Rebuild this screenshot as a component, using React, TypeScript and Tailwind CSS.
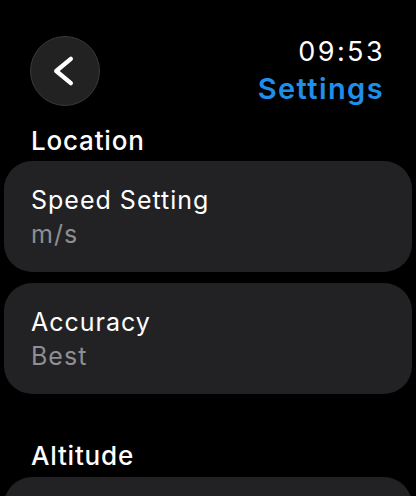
import React from "react";

interface IRow {
  title: string;
  value?: string;
}

const Card: React.FC<IRow> = ({ title, value }) => {
  return (
    <div className="h-[111px] rounded-[28px] bg-[#222224] pl-[27px] pt-[22px]">
      <div className="text-[25px] leading-[34px] tracking-[1px] text-white">
        {title}
      </div>
      {value && (
        <div className="text-[25px] leading-[34px] tracking-[1px] text-[#8e8e93]">
          {value}
        </div>
      )}
    </div>
  );
};

const BackButton = () => {
  return (
    <button className="w-[70px] h-[70px] rounded-full bg-[#222222] border border-[#3a3a3a] flex items-center justify-center">
      <svg width="70" height="70" viewBox="0 0 70 70" fill="none">
        <polyline
          points="41,22.5 26,35 41,47.5"
          stroke="white"
          strokeWidth="4.5"
          strokeLinecap="round"
          strokeLinejoin="round"
        />
      </svg>
    </button>
  );
};

const App = () => {
  return (
    <div className="w-[416px] h-[496px] bg-black overflow-hidden text-white font-['Inter',sans-serif]">
      <div className="flex justify-between items-start pt-[36px] pl-[30px] pr-[33px]">
        <BackButton />
        <div className="text-right">
          <div className="text-[27px] leading-[31px] tracking-[2.4px] -mr-[2px]">09:53</div>
          <div className="text-[29px] leading-[43px] font-semibold tracking-[1.4px] -mr-[1px] text-[#1f8fea]">
            Settings
          </div>
        </div>
      </div>

      <div className="mt-[15px] pl-[31px] text-[26px] leading-[32px] font-medium tracking-[0.8px]">
        Location
      </div>
      <div className="mt-[4px] px-[4px] flex flex-col gap-[11px]">
        <Card title="Speed Setting" value="m/s" />
        <Card title="Accuracy" value="Best" />
      </div>

      <div className="mt-[46px] pl-[31px] text-[26px] leading-[32px] font-medium tracking-[0.8px]">
        Altitude
      </div>
      <div className="mt-[5px] px-[4px]">
        <Card title="" />
      </div>
    </div>
  );
};

export default App;
